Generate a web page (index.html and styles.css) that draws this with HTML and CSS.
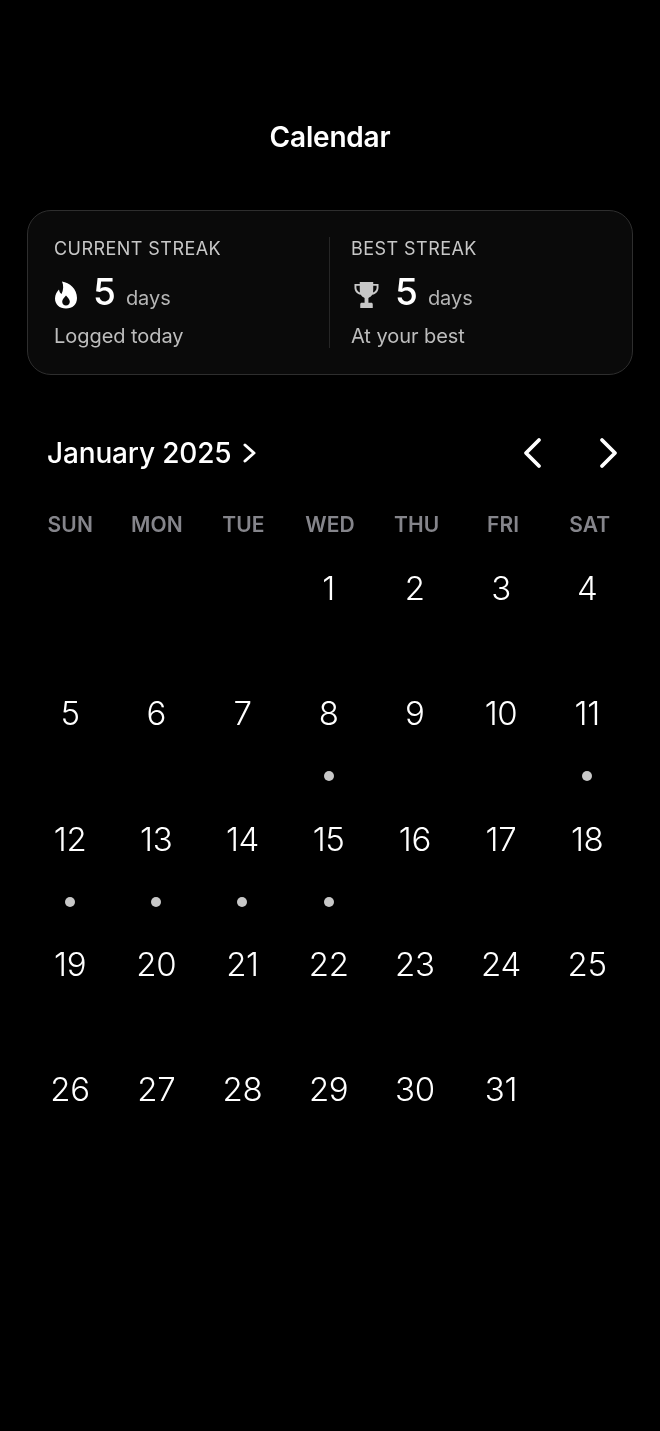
FILE: index.html
```html
<!DOCTYPE html>
<html lang="en">
<head>
<meta charset="utf-8">
<title>Calendar</title>
<link rel="stylesheet" href="styles.css">
</head>
<body>
<main class="screen">
  <h1 class="title">Calendar</h1>
  <section class="card">
    <div class="stat stat-left">
      <div class="label">CURRENT STREAK</div>
      <div class="value-row">
        <svg class="icon flame" viewBox="0 0 24 28"><path fill-rule="evenodd" d="M8 0.5C15.5 1.5 23 8 23 17C23 23.5 18.5 27.5 12 27.5C5.5 27.5 1 23.5 1 17.5C1 13.5 3 10.5 5 8.5C5.5 11 6.3 12.3 7.5 13C9.5 9 9.8 4.5 8 0.5ZM12 14.5C10.3 16.5 8.2 18.4 8.2 20.8C8.2 23.2 9.9 24.6 12 24.6C14.1 24.6 15.8 23.2 15.8 20.8C15.8 18.4 13.7 16.5 12 14.5Z"/></svg>
        <span class="num">5</span><span class="unit">days</span>
      </div>
      <div class="sub">Logged today</div>
    </div>
    <div class="stat stat-right">
      <div class="label">BEST STREAK</div>
      <div class="value-row">
        <svg class="icon trophy" viewBox="0 0 26 28"><path fill-rule="evenodd" d="M6 0.5H20V2.5H25.5V6.5C25.5 10.5 22.5 13 19 13.8C18 15.5 16.5 16.5 15 17V22H18C19 22 19.5 22.7 19.5 23.5V27.5H6.5V23.5C6.5 22.7 7 22 8 22H11V17C9.5 16.5 8 15.5 7 13.8C3.5 13 0.5 10.5 0.5 6.5V2.5H6ZM6 4.5H2.5V6.5C2.5 8.8 4 10.5 6.2 11.4C6 10 6 8 6 4.5ZM20 4.5C20 8 20 10 19.8 11.4C22 10.5 23.5 8.8 23.5 6.5V4.5Z"/></svg>
        <span class="num">5</span><span class="unit">days</span>
      </div>
      <div class="sub">At your best</div>
    </div>
  </section>

  <section class="calendar">
    <header class="month-bar">
      <div class="month">January 2025
        <svg class="month-chev" viewBox="0 0 13 20"><path d="M2 2L11 10L2 18"/></svg>
      </div>
      <div class="nav">
        <svg class="nav-chev" viewBox="0 0 20 32"><path d="M17 3L4 16L17 29"/></svg>
        <svg class="nav-chev" viewBox="0 0 20 32"><path d="M3 3L16 16L3 29"/></svg>
      </div>
    </header>
    <div class="weekdays">
      <span>SUN</span><span>MON</span><span>TUE</span><span>WED</span><span>THU</span><span>FRI</span><span>SAT</span>
    </div>
    <div class="days">
      <div class="day"></div><div class="day"></div><div class="day"></div>
      <div class="day">1</div><div class="day">2</div><div class="day">3</div><div class="day">4</div>
      <div class="day">5</div><div class="day">6</div><div class="day">7</div><div class="day logged">8</div><div class="day">9</div><div class="day">10</div><div class="day logged">11</div>
      <div class="day logged">12</div><div class="day logged">13</div><div class="day logged">14</div><div class="day logged">15</div><div class="day">16</div><div class="day">17</div><div class="day">18</div>
      <div class="day">19</div><div class="day">20</div><div class="day">21</div><div class="day">22</div><div class="day">23</div><div class="day">24</div><div class="day">25</div>
      <div class="day">26</div><div class="day">27</div><div class="day">28</div><div class="day">29</div><div class="day">30</div><div class="day">31</div><div class="day"></div>
    </div>
  </section>
</main>
</body>
</html>
```
FILE: styles.css
```css
* { box-sizing: border-box; }
html, body { margin: 0; padding: 0; background: #000; }
body { font-family: Inter, "Liberation Sans", sans-serif; color: #fff; }
.screen { width: 660px; height: 1431px; padding: 120px 27px 0; overflow: hidden; will-change: transform; }
.title { margin: 0; height: 34px; font-size: 28px; line-height: 34px; font-weight: 600; text-align: center; letter-spacing: -0.2px; }
.card {
  margin-top: 56px; height: 165px; display: flex; align-items: stretch;
  padding: 26px 0; background: #0a0a0a; border: 1px solid #2e2e2e; border-radius: 24px;
}
.stat { flex: 1 1 0; display: flex; flex-direction: column; }
.stat-left { padding-left: 26px; border-right: 1px solid #262626; flex: 0 0 302px; }
.stat-right { padding-left: 21px; }
.label { font-size: 18px; line-height: 22px; margin-top: 1px; color: #c8c8c8; letter-spacing: 0.45px; }
.value-row { display: flex; align-items: baseline; height: 44px; margin-top: 10px; }
.icon { align-self: center; fill: currentColor; flex: none; }
.flame { width: 24px; height: 28px; color: #fff; margin-top: 6px; }
.trophy { width: 25px; height: 28px; color: #c8c8c8; margin: 6px 0 0 3px; }
.num { font-size: 37px; line-height: 44px; font-weight: 500; margin-left: 15px; }
.trophy + .num { margin-left: 16px; }
.unit { font-size: 20px; color: #b5b5b5; margin-left: 10px; }
.sub { font-size: 20px; line-height: 24px; color: #bdbdbd; margin-top: 10px; letter-spacing: -0.05px; }
.calendar { margin-top: 58px; }
.month-bar { display: flex; justify-content: space-between; align-items: center; height: 40px; padding: 0 14px 0 20px; }
.month { display: flex; align-items: center; gap: 11px; font-size: 28px; line-height: 41px; font-weight: 550; letter-spacing: -0.15px; }
.month-chev { width: 13px; height: 20px; }
.month-chev path, .nav-chev path { fill: none; stroke: #fff; stroke-linecap: round; stroke-linejoin: round; }
.month-chev path { stroke-width: 3; }
.nav { display: flex; gap: 57px; }
.nav-chev { width: 20px; height: 32px; }
.nav-chev path { stroke-width: 3.8; }
.weekdays { display: grid; grid-template-columns: repeat(7, 1fr); margin-top: 38px; height: 28px; }
.weekdays span { text-align: center; font-size: 21px; line-height: 28px; font-weight: 600; color: #85858b; letter-spacing: 0.1px; }
.days { display: grid; grid-template-columns: repeat(7, 86.2px); grid-auto-rows: 125.3px; margin-top: 24px; }
.day { position: relative; text-align: center; font-size: 33px; line-height: 50px; font-weight: 350; letter-spacing: -0.3px; }
.logged::after {
  content: ""; position: absolute; left: 50%; top: 83px; width: 10px; height: 10px;
  margin-left: -5px; border-radius: 50%; background: #c8c8c8;
}
```
